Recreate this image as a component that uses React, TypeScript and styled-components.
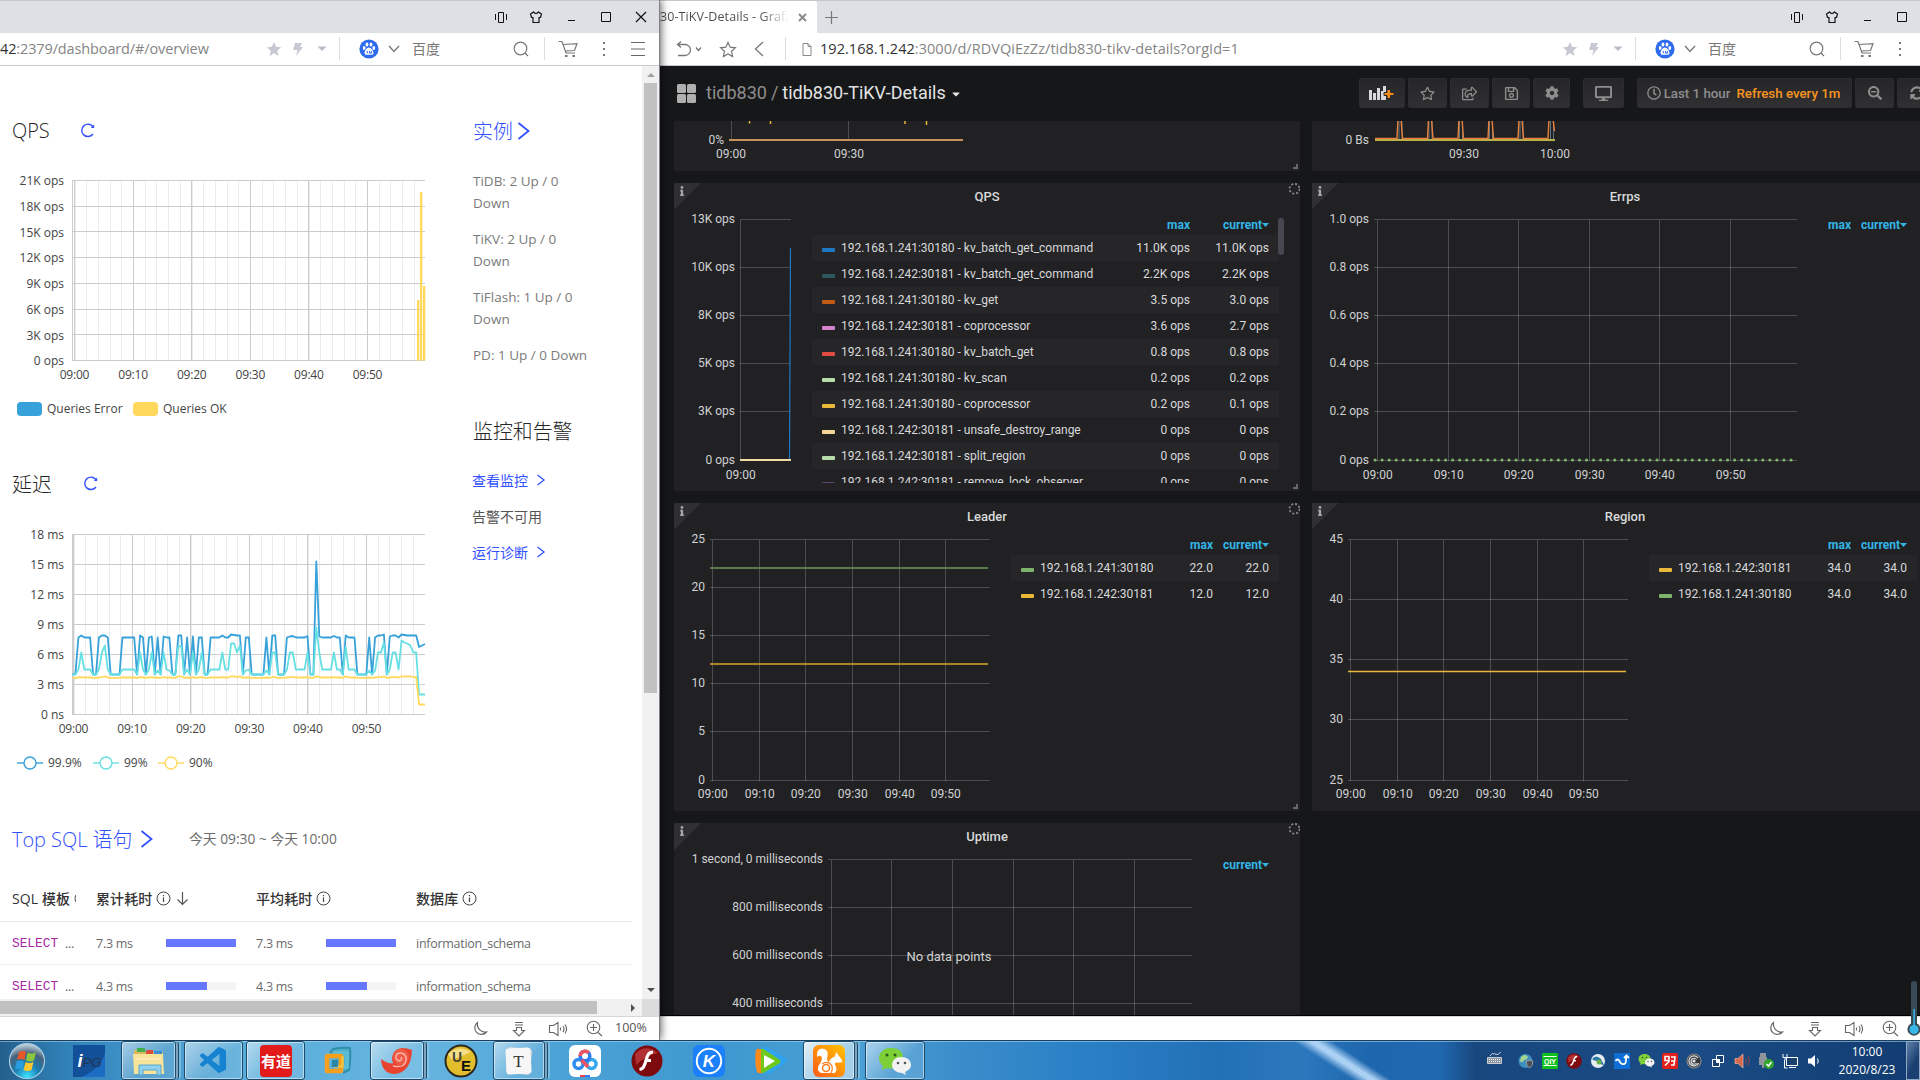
import React from "react";
import styled, { createGlobalStyle, css } from "styled-components";
import {
  FaCog, FaDesktop, FaInfo, FaRegClock, FaRegSave, FaRegShareSquare, FaRegStar, FaSearchMinus, FaSyncAlt, FaCaretDown,
} from "react-icons/fa";
import { VscVscode } from "react-icons/vsc";

const UI_FONT = `"Open Sans", "Noto Sans CJK SC", sans-serif`;
const GRAFANA_FONT = `Roboto, "Noto Sans CJK SC", sans-serif`;

const GlobalStyle = createGlobalStyle`
  * { box-sizing: border-box; }
  body { margin: 0; background: #16181b; overflow: hidden; }
  svg { display: block; flex: none; }
`;

/* ---------- Desktop ---------- */

const Desktop = styled.div`
  width: 1920px;
  height: 1080px;
  display: flex;
  flex-direction: column;
  overflow: hidden;
  font-family: ${UI_FONT};
`;

const Windows = styled.div`
  height: 1040px;
  display: flex;
  overflow: hidden;
`;

const Window = styled.section<{ $width: number; $front?: boolean }>`
  flex: none;
  width: ${(p) => p.$width}px;
  height: 1040px;
  display: flex;
  flex-direction: column;
  background: #fff;
  ${(p) =>
    p.$front &&
    css`
      position: relative;
      z-index: 2;
      border-right: 1px solid #7d8085;
      box-shadow: 0 0 9px rgba(0, 0, 0, 0.75);
    `}
`;

/* ---------- Browser chrome ---------- */

const TitleBar = styled.div`
  height: 33px;
  flex: none;
  display: flex;
  background: #dfe0e5;
  border-top: 1px solid #c5c6ca;
`;

const WindowButtons = styled.div`
  margin-left: auto;
  margin-right: 1px;
  display: flex;
`;

const Slot = styled.div<{ $w: number; $ml?: number }>`
  width: ${(p) => p.$w}px;
  margin-left: ${(p) => p.$ml || 0}px;
  flex: none;
  display: flex;
  align-items: center;
  justify-content: center;
`;

const Tab = styled.div`
  width: 157px;
  display: flex;
  align-items: center;
  background: #fff;
  border-radius: 0 2px 0 0;
`;

const TabTitle = styled.span`
  width: 129px;
  overflow: hidden;
  white-space: nowrap;
  padding-bottom: 2px;
  font-size: 12.5px;
  letter-spacing: 0.1px;
  background: linear-gradient(90deg, #4a4a4a 78%, #fff 100%);
  -webkit-background-clip: text;
  color: transparent;
`;

const AddressBar = styled.div`
  height: 33px;
  flex: none;
  display: flex;
  align-items: stretch;
  border-bottom: 1px solid #c9c9c9;
  background: #fff;
`;

const Url = styled.div<{ $spacing: number }>`
  display: flex;
  align-items: center;
  padding-bottom: 2px;
  white-space: nowrap;
  font-size: 14.5px;
  letter-spacing: ${(p) => p.$spacing}px;
  color: #858585;
  b { font-weight: 400; color: #333; }
`;

const Cluster = styled.div`
  margin-left: auto;
  margin-right: 7px;
  display: flex;
  align-items: stretch;
`;

const Divider = styled.div<{ $ml: number; $mr: number }>`
  width: 1px;
  margin: 4px ${(p) => p.$mr}px 5px ${(p) => p.$ml}px;
  background: #dcdce2;
`;

const EngineName = styled.span`
  width: 28px;
  margin-left: 8px;
  align-self: center;
  padding-bottom: 2px;
  font-size: 14px;
  color: #777;
`;

const StatusBar = styled.div`
  height: 24px;
  flex: none;
  display: flex;
  justify-content: flex-end;
  background: #fff;
  border-top: 1px solid #d8d8dc;
`;

const ZoomText = styled.span`
  width: 47px;
  align-self: center;
  padding: 0 0 2px 3px;
  font-size: 12.5px;
  color: #555;
`;

function ChromeButtons({ close }: { close?: boolean }) {
  return (
    <>
      <Slot $w={35}>
        <svg width="14" height="14" fill="none" stroke="#111">
          <path d="M4.500 2.500h5v10h-5zM1.500 4v6M12.500 4v6" />
        </svg>
      </Slot>
      <Slot $w={35}>
        <svg width="14" height="14" fill="none" stroke="#111" strokeWidth="1.200">
          <path d="M4.500 2 L1.500 4 L2.500 7.500 H4 V12.500 H10 V7.500 H11.500 L12.500 4 L9.500 2 Q7 5 4.500 2z" />
        </svg>
      </Slot>
      <Slot $w={35}>
        <svg width="14" height="14" stroke="#111"><path d="M4 10.500h7" /></svg>
      </Slot>
      <Slot $w={35}>
        <svg width="14" height="14" fill="none" stroke="#111"><path d="M2.500 2.500h9v9h-9z" /></svg>
      </Slot>
      <Slot $w={35}>
        {close && (
          <svg width="14" height="14" stroke="#111" strokeWidth="1.200"><path d="M2 2l10 10M12 2L2 12" /></svg>
        )}
      </Slot>
    </>
  );
}

function AddressCluster() {
  return (
    <Cluster>
      <Slot $w={24}>
        <svg width="16" height="16" fill="#c6c8d4"><path d="M8 1l2.100 4.800 5 .5-3.800 3.500 1.100 5.200L8 12.300 3.600 15l1.100-5.200L.9 6.300l5-.5z" /></svg>
      </Slot>
      <Slot $w={24}>
        <svg width="12" height="16" fill="#c6c8d4"><path d="M3 2h7L8 6h3L4 15l1.500-6H1z" /></svg>
      </Slot>
      <Slot $w={24}>
        <svg width="10" height="6" fill="#b9bbc6"><path d="M.5.5h9L5 5z" /></svg>
      </Slot>
      <Divider $ml={5} $mr={14} />
      <Slot $w={30}>
        <svg width="20" height="20" fill="#fff">
          <circle cx="10" cy="10" r="9.600" fill="#2f6bee" />
          <ellipse cx="5.200" cy="9" rx="1.400" ry="1.900" />
          <ellipse cx="8" cy="5.600" rx="1.400" ry="2" />
          <ellipse cx="12" cy="5.600" rx="1.400" ry="2" />
          <ellipse cx="14.800" cy="9" rx="1.400" ry="1.900" />
          <path d="M10 8.500c2 0 4.500 3.500 4.500 5.200 0 2.600-2.600 2-4.500 2s-4.500.6-4.500-2C5.500 12 8 8.500 10 8.500z" />
          <path d="M8.300 12v2.300M10.600 12v2.200h1.800V12" stroke="#2f6bee" fill="none" />
        </svg>
      </Slot>
      <Slot $w={20}>
        <svg width="12" height="8" fill="none" stroke="#777" strokeWidth="1.300"><path d="M1 1l5 5.500L11 1" /></svg>
      </Slot>
      <EngineName>百度</EngineName>
      <Slot $w={20} $ml={71}>
        <svg width="16" height="16" fill="none" stroke="#777" strokeWidth="1.200"><circle cx="7.500" cy="7.500" r="6.300" /><path d="M12 12l3 3" /></svg>
      </Slot>
      <Divider $ml={13} $mr={9} />
      <Slot $w={28}>
        <svg width="20" height="18" fill="none" stroke="#777" strokeWidth="1.200">
          <path d="M.5 1.500H4L8 13h9M5 4.500l14-.8-2.500 6.800-9.200.5" />
          <path d="M7 16h2.500M14.500 16H17" strokeWidth="2" />
        </svg>
      </Slot>
      <Slot $w={24} $ml={10}>
        <svg width="4" height="16" fill="#777"><path d="M1 1h2v2H1zM1 7h2v2H1zM1 13h2v2H1z" /></svg>
      </Slot>
      <Slot $w={28} $ml={8}>
        <svg width="14" height="16" stroke="#666" strokeWidth="1.200"><path d="M0 1.500h14M0 8h14M0 14.500h14" /></svg>
      </Slot>
    </Cluster>
  );
}

function StatusIcons({ label }: { label: string }) {
  return (
    <StatusBar>
      <Slot $w={38}>
        <svg width="16" height="16" fill="none" stroke="#666" strokeWidth="1.200"><path d="M5.500 1.500A6.600 6.600 0 1 0 14.500 11C9 12 4.500 7 5.500 1.500z" /></svg>
      </Slot>
      <Slot $w={39}>
        <svg width="14" height="16" fill="none" stroke="#666" strokeWidth="1.100"><path d="M3 1.500h8M3 4h8M4.500 6.500h5v3h3L7 15 1.500 9.500h3z" /></svg>
      </Slot>
      <Slot $w={39}>
        <svg width="20" height="16" fill="none" stroke="#666" strokeWidth="1.100"><path d="M1.500 4.500h4L10 1.500v13L5.500 11.500h-4zM12.500 6.500v3M15 5q2 3 0 6M17 3.500q3 4.500 0 9" /></svg>
      </Slot>
      <Slot $w={35}>
        <svg width="17" height="17" fill="none" stroke="#666" strokeWidth="1.100"><circle cx="7.500" cy="7.500" r="6.300" /><path d="M12 12.500l4 3.500M4 7.500h7M7.500 4v7" /></svg>
      </Slot>
      <ZoomText>{label}</ZoomText>
    </StatusBar>
  );
}

/* ---------- TiDB dashboard (left) ---------- */

const Viewport = styled.div`
  height: 950px;
  display: grid;
  grid-template-columns: 642px 1fr;
  grid-template-rows: 933px 17px;
  background: #fff;
`;

const Page = styled.div`
  overflow: hidden;
  padding-top: 49px;
  display: flex;
  flex-direction: column;
`;

const Overview = styled.div`
  flex: none;
  display: grid;
  grid-template-columns: 473px 1fr;
  height: 667px;
`;

const Column = styled.div`
  display: flex;
  flex-direction: column;
`;

const Heading = styled.h2<{ $mt?: number; $link?: boolean; $pl?: number }>`
  flex: none;
  margin: ${(p) => p.$mt || 0}px 0 0;
  padding-left: ${(p) => p.$pl || 0}px;
  height: 32px;
  display: flex;
  align-items: center;
  white-space: nowrap;
  font-size: 19.900px;
  font-weight: 300;
  color: ${(p) => (p.$link ? "#3351ff" : "#262626")};
`;

const HeadingText = styled.span<{ $w: number }>`
  width: ${(p) => p.$w}px;
  padding-bottom: 2px;
`;

const Range = styled.span`
  margin-left: 35px;
  padding-bottom: 3px;
  font-size: 13.800px;
  font-weight: 400;
  color: #6c6c6c;
`;

const ChartLegend = styled.div`
  height: 38px;
  padding-left: 17px;
  display: flex;
  align-items: center;
  font-size: 12px;
  color: #444;
`;

const LegendLabel = styled.span<{ $w: number }>`
  width: ${(p) => p.$w}px;
  margin-left: 5px;
  padding-bottom: 1px;
  white-space: nowrap;
`;

const Swatch = styled.i<{ $c: string }>`
  width: 25px;
  height: 14px;
  border-radius: 4px;
  background: ${(p) => p.$c};
`;

const Instance = styled.p`
  width: 120px;
  margin: 0 0 14px;
  font-size: 13.500px;
  line-height: 22px;
  color: #7b7b7b;
`;

const InstanceList = styled.div`
  margin-top: 23px;
  height: 245px;
`;

const ActionLine = styled.div<{ $link?: boolean }>`
  height: 36px;
  display: flex;
  align-items: center;
  gap: 8px;
  padding-bottom: 2px;
  font-size: 14px;
  color: ${(p) => (p.$link ? "#3351ff" : "#555")};
`;

const Actions = styled.div`
  margin: 16px 0 0 -1px;
`;

const Table = styled.div`
  flex: none;
  width: 632px;
  margin-top: 22px;
`;

const Row = styled.div<{ $head?: boolean }>`
  height: ${(p) => (p.$head ? 45 : 43)}px;
  padding: 0 0 ${(p) => (p.$head ? 2 : 0)}px 12px;
  display: grid;
  grid-template-columns: 84px 160px 160px 1fr;
  align-items: center;
  border-bottom: 1px solid ${(p) => (p.$head ? "#e6e6e6" : "#f0f0f0")};
  font-size: ${(p) => (p.$head ? 14 : 12.500)}px;
  font-weight: ${(p) => (p.$head ? 500 : 400)};
  letter-spacing: ${(p) => (p.$head ? 0.1 : -0.27)}px;
  color: ${(p) => (p.$head ? "#333" : "#6a6a6a")};
  white-space: nowrap;
`;

const Cell = styled.div<{ $clip?: number }>`
  display: flex;
  align-items: center;
  gap: 4px;
  overflow: hidden;
  width: ${(p) => (p.$clip ? `${p.$clip}px` : "auto")};
`;

const Sql = styled.code`
  font-family: "Liberation Mono", monospace;
  font-size: 12.800px;
  letter-spacing: 0;
  color: #a626a4;
`;

const Amount = styled.span`
  width: 66px;
`;

const Meter = styled.div`
  width: 70px;
  height: 8px;
  background: #f4f4f4;
`;

const MeterFill = styled.div<{ $ratio: number }>`
  width: ${(p) => p.$ratio * 100}%;
  height: 8px;
  background: #6678ff;
`;

const VScroll = styled.div`
  background: #f1f1f1;
  display: flex;
  flex-direction: column;
  align-items: center;
  justify-content: space-between;
  padding: 7px 0 6px;
`;

const VThumb = styled.div`
  width: 13px;
  height: 610px;
  margin-top: 6px;
  margin-bottom: auto;
  background: #c1c1c1;
`;

const HScroll = styled.div`
  background: #f1f1f1;
  display: flex;
  align-items: center;
  justify-content: space-between;
  padding-right: 6px;
`;

const HThumb = styled.div`
  width: 597px;
  height: 13px;
  background: #c1c1c1;
`;

const ScrollCorner = styled.div`
  background: #dcdcdc;
`;

const Chevron = ({ size }: { size: "l" | "s" }) =>
  size === "l" ? (
    <svg width="14" height="18" fill="none" stroke="#3351ff" strokeWidth="1.800"><path d="M1.500 1l10 8-10 8" /></svg>
  ) : (
    <svg width="10" height="12" fill="none" stroke="#3351ff" strokeWidth="1.300"><path d="M1.500 1L8 6l-6.500 5" /></svg>
  );

const Reload = () => (
  <svg width="16" height="16" fill="none" stroke="#3351ff" strokeWidth="1.400">
    <path d="M13 11A6.200 6.200 0 1 1 13.200 4" /><path d="M14.200 1.500v3.500h-3.400z" fill="#3351ff" stroke="none" />
  </svg>
);

const InfoCircle = () => (
  <svg width="15" height="15" fill="none" stroke="#444"><circle cx="7.500" cy="7.500" r="6.500" /><path d="M7.500 6.500v4.500M7.500 4v1.300" strokeWidth="1.200" /></svg>
);

const minutes = ["09:00", "09:10", "09:20", "09:30", "09:40", "09:50"];

const lightText = { fontFamily: "Open Sans, sans-serif", fontSize: 12, fill: "#444" };

function LightGrid({ top, step, labels, left, x0 }: { top: number; step: number; labels: string[]; left: number; x0: number }) {
  const bottom = top + step * (labels.length - 1);
  const minors = Array.from({ length: 30 }, (_, i) => x0 + i * 11.7);
  return (
    <g shapeRendering="crispEdges">
      {minors.map((x, i) => (
        <path key={i} d={`M${x} ${top}V${bottom}`} stroke="#ececec" />
      ))}
      {labels.map((l, i) => (
        <path key={l} d={`M${left} ${Math.round(top + i * step) + 0.5}H425`} stroke="#ccc" />
      ))}
      {minutes.map((m, i) => (
        <path key={m} d={`M${Math.round(x0 + i * 58.6) - 0.5} ${top}V${bottom}`} stroke="#ccc" />
      ))}
      <path d={`M${left + 0.5} ${top}V${bottom + 1}`} stroke="#ccc" />
      {labels.map((l, i) => (
        <text key={l} x="64" y={top + i * step + 1} dy=".36em" textAnchor="end" {...lightText}>{l}</text>
      ))}
      {minutes.map((m, i) => (
        <text key={m} x={x0 - 0.500 + i * 58.6} y={bottom + 14.500} dy=".36em" textAnchor="middle" letterSpacing="-.2" {...lightText}>{m}</text>
      ))}
    </g>
  );
}

/* Latency samples, one every 30 seconds, in milliseconds. */
const p999 = [
  4.05, 4.05, 7.7, 7.9, 7.7, 7.7, 7.7, 4, 4, 7.7, 7.9, 7.9, 7.7, 4, 4, 4, 4, 7.7, 7.7, 7.7, 7.7, 7.7, 4, 7.9, 7.7, 4, 7.7, 7.8, 4, 7.7, 4, 7.8,
  7.7, 7.7, 4, 4, 7.9, 7.9, 4, 7.7, 4, 7.8, 4, 7.7, 7.7, 4, 4, 7.7, 7.7, 7.7, 7.7, 7.9, 7.7, 7.7, 8, 7.95, 7.9, 7.9, 4, 7.7, 7.7, 4, 4, 4, 4, 4,
  7.7, 4, 7.9, 7.9, 4, 4, 4, 7.7, 7.8, 7.85, 7.7, 7.7, 7.7, 7.7, 7.85, 4, 4, 15.3, 7.8, 7.7, 7.7, 7.7, 7.7, 7.85, 7.7, 7.7, 4, 7.9, 7.7, 7.7, 7.7,
  4, 4, 4, 4, 7.7, 4, 7.7, 7.9, 7.9, 8, 4, 7.8, 7.9, 7.9, 7.7, 8, 7.95, 7.9, 7.9, 7.9, 7.9, 6.75, 6.9, 7.05,
];
const p99 = [
  4, 4, 4.5, 6.2, 4.5, 4.5, 4.5, 4, 4, 4.5, 6.2, 6.9, 4.5, 4, 4, 4, 4, 4.5, 4.5, 4.5, 4.5, 4.5, 4, 6.2, 4.5, 4, 4.5, 6.2, 4, 4.4, 4, 6.2, 4.5,
  4.4, 4, 4, 6.8, 6.9, 4, 4.5, 4, 6.2, 4, 4.5, 6.2, 4, 4, 4.5, 4.5, 4.5, 4.5, 6.2, 4.5, 4.5, 7.1, 7.1, 6.2, 6.9, 4, 4.4, 4.5, 4, 4, 4, 4, 4, 4.4,
  4, 6.2, 6.2, 4, 4, 4, 4.5, 6.2, 6.2, 4.5, 4.5, 4.5, 4.5, 6.2, 4, 4, 8.7, 6.2, 4.5, 4.5, 4.5, 4.5, 6.2, 4.5, 4.5, 4, 6.8, 4.5, 4.5, 4.5, 4, 4,
  4, 4, 4.4, 4, 4.4, 6.2, 6.2, 7.2, 4, 4.5, 6.2, 6.2, 4.5, 7.4, 7.2, 7.1, 6.9, 6.2, 6.2, 2, 2, 2,
];
const p90 = p99.map((v) => (v === 2 ? 1 : v < 4.2 ? 3.66 : v < 5 ? 3.7 : v < 6.5 ? 3.74 : 3.82));

const latencyPath = (values: number[]) =>
  values.map((v, i) => `${i ? "L" : "M"}${(72.500 + (i * 352.500) / (values.length - 1)).toFixed(1)} ${(714.500 - v * 10).toFixed(1)}`).join("");

const latencySeries = [
  { name: "99.9%", color: "#37a2da", values: p999, w: 45 },
  { name: "99%", color: "#67e0e3", values: p99, w: 34 },
  { name: "90%", color: "#ffd85c", values: p90, w: 40 },
];

const instances = ["TiDB: 2 Up / 0 Down", "TiKV: 2 Up / 0 Down", "TiFlash: 1 Up / 0 Down", "PD: 1 Up / 0 Down"];

function DashboardWindow() {
  return (
    <Window $width={660} $front>
      <TitleBar>
        <WindowButtons><ChromeButtons close /></WindowButtons>
      </TitleBar>
      <AddressBar>
        <Url $spacing={-0.13}><b>42</b>:2379/dashboard/#/overview</Url>
        <AddressCluster />
      </AddressBar>
      <Viewport>
        <Page>
          <Overview>
            <Column>
              <Heading $pl={12}><HeadingText $w={68}>QPS</HeadingText><Reload /></Heading>
              <svg width="473" height="243" viewBox="0 147 473 243">
                <LightGrid
                  top={180} step={25.714} left={72} x0={75}
                  labels={["21K ops", "18K ops", "15K ops", "12K ops", "9K ops", "6K ops", "3K ops", "0 ops"]}
                />
                <path d="M417 300h2.300v60.500H417zM420 192h2.300v168.500H420zM423 286h2.300v74.500H423z" fill="#ffd85c" />
              </svg>
              <ChartLegend>
                <Swatch $c="#37a2da" /><LegendLabel $w={86}>Queries Error</LegendLabel>
                <Swatch $c="#ffd85c" /><LegendLabel $w={80}>Queries OK</LegendLabel>
              </ChartLegend>
              <Heading $pl={12} $mt={40}><HeadingText $w={71}>延迟</HeadingText><Reload /></Heading>
              <svg width="473" height="244" viewBox="0 500 473 244">
                <LightGrid top={534} step={30} left={72} x0={74} labels={["18 ms", "15 ms", "12 ms", "9 ms", "6 ms", "3 ms", "0 ns"]} />
                {latencySeries.map((s) => (
                  <path key={s.name} d={latencyPath(s.values)} fill="none" stroke={s.color} strokeWidth="1.800" strokeLinejoin="round" />
                ))}
              </svg>
              <ChartLegend>
                {latencySeries.map((s) => (
                  <React.Fragment key={s.name}>
                    <svg width="26" height="14" stroke={s.color} strokeWidth="1.400" fill="#fff"><path d="M0 7h26" /><circle cx="13" cy="7" r="6" /></svg>
                    <LegendLabel $w={s.w}>{s.name}</LegendLabel>
                  </React.Fragment>
                ))}
              </ChartLegend>
            </Column>
            <Column>
              <Heading $link><HeadingText $w={44}>实例</HeadingText><Chevron size="l" /></Heading>
              <InstanceList>{instances.map((t) => <Instance key={t}>{t}</Instance>)}</InstanceList>
              <Heading><HeadingText $w={110}>监控和告警</HeadingText></Heading>
              <Actions>
                <ActionLine $link>查看监控<Chevron size="s" /></ActionLine>
                <ActionLine>告警不可用</ActionLine>
                <ActionLine $link>运行诊断<Chevron size="s" /></ActionLine>
              </Actions>
            </Column>
          </Overview>
          <Heading $pl={12} $mt={41} $link>
            <HeadingText $w={128}>Top SQL 语句</HeadingText><Chevron size="l" />
            <Range>今天 09:30 ~ 今天 10:00</Range>
          </Heading>
          <Table>
            <Row $head>
              <Cell $clip={64}>SQL 模板<InfoCircle /></Cell>
              <Cell>累计耗时<InfoCircle />
                <svg width="14" height="15" fill="none" stroke="#555" strokeWidth="1.200"><path d="M7.500 1v12.500M2.500 8.500l5 5 5-5" /></svg>
              </Cell>
              <Cell>平均耗时<InfoCircle /></Cell>
              <Cell>数据库<InfoCircle /></Cell>
            </Row>
            {[{ t: "7.3 ms", r: 1 }, { t: "4.3 ms", r: 0.59 }].map((q) => (
              <Row key={q.t}>
                <Cell><Sql>SELECT</Sql>&nbsp;...</Cell>
                <Cell><Amount>{q.t}</Amount><Meter><MeterFill $ratio={q.r} /></Meter></Cell>
                <Cell><Amount>{q.t}</Amount><Meter><MeterFill $ratio={q.r} /></Meter></Cell>
                <Cell>information_schema</Cell>
              </Row>
            ))}
          </Table>
        </Page>
        <VScroll>
          <svg width="8" height="4" fill="#a0a0a0"><path d="M0 4l4-4 4 4z" /></svg>
          <VThumb />
          <svg width="8" height="5" fill="#505050"><path d="M0 0h8L4 4z" /></svg>
        </VScroll>
        <HScroll>
          <HThumb />
          <svg width="5" height="8" fill="#505050"><path d="M0 0v8l4-4z" /></svg>
        </HScroll>
        <ScrollCorner />
      </Viewport>
      <StatusIcons label="100%" />
    </Window>
  );
}

/* ---------- Grafana (right) ---------- */

const Grafana = styled.div`
  height: 950px;
  overflow: hidden;
  background: #161719;
  border-bottom: 1px solid #000;
  font-family: ${GRAFANA_FONT};
  color: #d8d9da;
`;

const GrafanaHeader = styled.header`
  height: 55px;
  padding: 0 0 1px 17px;
  display: flex;
  align-items: center;
`;

const Breadcrumb = styled.div`
  width: 653px;
  margin-left: 10px;
  display: flex;
  align-items: center;
  gap: 4px;
  padding-bottom: 1px;
  font-size: 18px;
  color: #8e8e8e;
  b { font-weight: 400; color: #e3e3e3; }
  svg { margin-top: 3px; color: #e3e3e3; }
`;

const NavButton = styled.button<{ $w: number; $ml?: number }>`
  flex: none;
  width: ${(p) => p.$w}px;
  height: 30px;
  margin: 0 0 0 ${(p) => (p.$ml === undefined ? 3 : p.$ml)}px;
  padding: 0;
  display: flex;
  align-items: center;
  justify-content: center;
  gap: 3px;
  border: 1px solid #2c2c2f;
  border-radius: 2px;
  background: linear-gradient(#262628, #303032);
  color: #8e8e8e;
  font: 400 13.300px ${GRAFANA_FONT};
  b { font-weight: 500; color: #f79520; margin-left: 3px; }
`;

const TimeRange = styled.span`
  display: flex;
  align-items: center;
  gap: 3px;
  margin-left: -2px;
  font-weight: 500;
`;

const PanelGrid = styled.div`
  padding-left: 14px;
  display: grid;
  grid-template-columns: 626px 626px;
  grid-template-rows: 50px 308px 308px 308px;
  gap: 12px;
`;

const PanelBox = styled.article`
  position: relative;
  background: #212124;
  border-radius: 2px;
  overflow: hidden;
`;

const PanelTitle = styled.h3`
  height: 27px;
  margin: 0;
  font-size: 13px;
  line-height: 27px;
  font-weight: 500;
  text-align: center;
  color: #d8d9da;
`;

const PanelBody = styled.div`
  display: flex;
`;

const InfoCorner = styled.div`
  position: absolute;
  left: 0;
  top: 0;
  width: 27px;
  height: 27px;
  padding: 3px 0 0 3px;
  font-size: 10px;
  color: #a8a8a8;
  background: linear-gradient(135deg, #303034 50%, transparent 50%);
`;

const Spinner = styled.div`
  position: absolute;
  right: 0;
  top: 0;
`;

const ResizeHandle = styled.div`
  position: absolute;
  right: 2px;
  bottom: 2px;
  width: 5px;
  height: 5px;
  border: solid #6a6a6a;
  border-width: 0 2px 2px 0;
`;

const Legend = styled.div<{ $w: number }>`
  width: ${(p) => p.$w}px;
  height: 273px;
  padding-top: 4px;
  overflow: hidden;
  font-size: 12px;
`;

const LegendRow = styled.div<{ $cur: number; $head?: boolean; $odd?: boolean }>`
  height: ${(p) => (p.$head ? 21 : 26)}px;
  padding: 0 10px;
  display: grid;
  grid-template-columns: 13px 1fr auto ${(p) => p.$cur}px;
  align-items: center;
  white-space: nowrap;
  background: ${(p) => (p.$odd ? "#262629" : "transparent")};
  font-weight: ${(p) => (p.$head ? 700 : 400)};
  color: ${(p) => (p.$head ? "#33b5e5" : "#d8d9da")};
  span { padding-left: 6px; }
  em { font-style: normal; text-align: right; display: flex; justify-content: flex-end; align-items: center; }
`;

const SeriesDash = styled.i<{ $c: string }>`
  height: 4px;
  margin-top: 4px;
  border-radius: 1px;
  background: ${(p) => p.$c};
`;

const LegendScrollbar = styled.div`
  width: 6px;
  height: 37px;
  margin: 8px 0 0 -1px;
  border-radius: 3px;
  background: #464751;
`;

type Series = { name: string; color: string; max: string; cur: string };

function SeriesLegend({ w, cur = 56, rows = [], noMax }: { w: number; cur?: number; rows?: Series[]; noMax?: boolean }) {
  return (
    <Legend $w={w}>
      <LegendRow $head $cur={cur}>
        <i /><span /><em>{noMax ? "" : "max"}</em>
        <em>current<svg width="7" height="4" fill="#33b5e5"><path d="M0 0h7L3.500 4z" /></svg></em>
      </LegendRow>
      {rows.map((r, i) => (
        <LegendRow key={r.name} $cur={cur} $odd={i % 2 === 0}>
          <SeriesDash $c={r.color} /><span>{r.name}</span><em>{r.max}</em><em>{r.cur}</em>
        </LegendRow>
      ))}
    </Legend>
  );
}

const darkText = { fontFamily: "Roboto, sans-serif", fontSize: 12, fill: "#d0d1d2" };

type GridProps = {
  x: number; y: number; w: number; h?: number;
  left: number; right: number;
  ys: [number, string][];
  xs: number[];
  xLabels?: string[];
  bottom?: number;
  children?: React.ReactNode;
};

function DarkChart({ x, y, w, h = 281, left, right, ys, xs, xLabels = [], bottom, children }: GridProps) {
  const floor = bottom || ys[ys.length - 1][0];
  return (
    <svg width={w} height={h} viewBox={`${x} ${y} ${w} ${h}`}>
      <g stroke="#fff" strokeOpacity=".2" shapeRendering="crispEdges">
        {ys.map(([v]) => <path key={v} d={`M${left} ${v}H${right}`} />)}
        {xs.map((v) => <path key={v} d={`M${v} ${ys[0][0]}V${floor}`} />)}
      </g>
      {children}
      {ys.map(([v, l]) => (
        <text key={v} x={left - 5} y={v - 0.500} dy=".35em" textAnchor="end" {...darkText}>{l}</text>
      ))}
      {xLabels.map((l, i) => (
        <text key={l} x={xs[i] + 0.300} y={Math.max(floor + 13.500, floor < 500 ? floor + 14.500 : 0)} dy=".35em" textAnchor="middle" {...darkText}>{l}</text>
      ))}
    </svg>
  );
}

function Panel({ title, children }: { title: string; children: React.ReactNode }) {
  return (
    <PanelBox>
      <PanelTitle>{title}</PanelTitle>
      <PanelBody>{children}</PanelBody>
      <InfoCorner><FaInfo /></InfoCorner>
      <Spinner>
        <svg width="12" height="12" fill="none" stroke="#8e8e8e" strokeWidth="1.600"><circle cx="6.500" cy="5.800" r="5" strokeDasharray="2 1.930" /></svg>
      </Spinner>
      <ResizeHandle />
    </PanelBox>
  );
}

const ops = (labels: string[]): [number, string][] => labels.map((l, i) => [i === 5 ? 460.500 : 219.500 + i * 48, `${l} ops`]);

const qpsSeries: Series[] = [
  { name: "192.168.1.241:30180 - kv_batch_get_command", color: "#1f78c1", max: "11.0K ops", cur: "11.0K ops" },
  { name: "192.168.1.242:30181 - kv_batch_get_command", color: "#2f575e", max: "2.2K ops", cur: "2.2K ops" },
  { name: "192.168.1.241:30180 - kv_get", color: "#c15c17", max: "3.5 ops", cur: "3.0 ops" },
  { name: "192.168.1.242:30181 - coprocessor", color: "#d683ce", max: "3.6 ops", cur: "2.7 ops" },
  { name: "192.168.1.241:30180 - kv_batch_get", color: "#e24d42", max: "0.8 ops", cur: "0.8 ops" },
  { name: "192.168.1.241:30180 - kv_scan", color: "#b7dbab", max: "0.2 ops", cur: "0.2 ops" },
  { name: "192.168.1.241:30180 - coprocessor", color: "#eab839", max: "0.2 ops", cur: "0.1 ops" },
  { name: "192.168.1.242:30181 - unsafe_destroy_range", color: "#f4d598", max: "0 ops", cur: "0 ops" },
  { name: "192.168.1.242:30181 - split_region", color: "#b7dbab", max: "0 ops", cur: "0 ops" },
  { name: "192.168.1.242:30181 - remove_lock_observer", color: "#584477", max: "0 ops", cur: "0 ops" },
];

const GREEN = "#7eb26d";
const YELLOW = "#eab839";

function GrafanaWindow() {
  return (
    <Window $width={1295}>
      <TitleBar>
        <Tab>
          <TabTitle>30-TiKV-Details - Grafa</TabTitle>
          <Slot $w={26}><svg width="9" height="9" stroke="#8a8a8a" strokeWidth="2"><path d="M1 1l7 7M8 1L1 8" /></svg></Slot>
        </Tab>
        <Slot $w={28}><svg width="13" height="13" stroke="#777" strokeWidth="1.200"><path d="M6.500 0v13M0 6.500h13" /></svg></Slot>
        <WindowButtons><ChromeButtons /></WindowButtons>
      </TitleBar>
      <AddressBar>
        <Slot $w={32} $ml={13}>
          <svg width="26" height="16" fill="none" stroke="#777" strokeWidth="1.300">
            <path d="M5 .5L1.500 3.500 5 6.500M1.500 3.500H9a5.500 5.500 0 0 1 0 11H2M20 6.500l2.500 3 2.500-3" />
          </svg>
        </Slot>
        <Slot $w={24} $ml={11}>
          <svg width="18" height="17" fill="none" stroke="#777" strokeWidth="1.200"><path d="M9 1.500l2.200 4.700 5.200.6-3.900 3.500 1.100 5.200L9 12.900l-4.600 2.600 1.100-5.200-3.900-3.500 5.200-.6z" /></svg>
        </Slot>
        <Slot $w={20} $ml={9}>
          <svg width="10" height="16" fill="none" stroke="#777" strokeWidth="1.300"><path d="M9 1L1.500 8 9 15" /></svg>
        </Slot>
        <Divider $ml={16} $mr={11} />
        <Slot $w={20}>
          <svg width="10" height="13" fill="none" stroke="#888"><path d="M1 .5h5l3 3v9H1zM6 .5v3h3" /></svg>
        </Slot>
        <Slot $w={3} />
        <Url $spacing={0.04}><b>192.168.1.242</b>:3000/d/RDVQiEzZz/tidb830-tikv-details?orgId=1</Url>
        <AddressCluster />
      </AddressBar>
      <Grafana>
        <GrafanaHeader>
          <svg width="19" height="19" fill="#b0b0b0"><rect width="9" height="9" rx="1.500" /><rect x="10" width="9" height="9" rx="1.500" /><rect y="10" width="9" height="9" rx="1.500" /><rect x="10" y="10" width="9" height="9" rx="1.500" /></svg>
          <Breadcrumb><span>tidb830</span><span>/</span><b>tidb830-TiKV-Details</b><FaCaretDown size={12} /></Breadcrumb>
          <NavButton $w={46} $ml={0}>
            <svg width="26" height="16">
              <path d="M0 5h3v10H0zM4 8h3v7H4zM8 3h3v12H8zM12 6h3v9h-3zM14 1h3v14h-3z" fill="#d8d9da" />
              <path d="M18 4.500h3.500v3H25v3h-3.500v3H18v-3h-3v-3h3z" fill="#f38a1c" stroke="#2a2a2c" />
            </svg>
          </NavButton>
          <NavButton $w={39}><FaRegStar size={15} /></NavButton>
          <NavButton $w={39}><FaRegShareSquare size={15} /></NavButton>
          <NavButton $w={38}><FaRegSave size={15} /></NavButton>
          <NavButton $w={37}><FaCog size={14} /></NavButton>
          <NavButton $w={41} $ml={13}><FaDesktop size={17} /></NavButton>
          <NavButton $w={215} $ml={13}><TimeRange><FaRegClock size={14} />Last 1 hour</TimeRange><b>Refresh every 1m</b></NavButton>
          <NavButton $w={39}><FaSearchMinus size={14} /></NavButton>
          <NavButton $w={39}><FaSyncAlt size={14} /></NavButton>
        </GrafanaHeader>
        <PanelGrid>
          <PanelBox>
            <svg width="626" height="50" viewBox="674 121 626 50">
              <path d="M731.500 121v18M848.500 121v18" stroke="#4d4d50" />
              <path d="M749.500 121v2.500M770.500 121v3M905 121v3M926.500 121v4" stroke={YELLOW} strokeWidth="1.500" />
              <path d="M729 140H963" stroke="#c4915c" strokeWidth="2" />
              <text x="724" y="139.500" dy=".35em" textAnchor="end" {...darkText}>0%</text>
              <text x="731" y="154" dy=".35em" textAnchor="middle" {...darkText}>09:00</text>
              <text x="849" y="154" dy=".35em" textAnchor="middle" {...darkText}>09:30</text>
            </svg>
            <ResizeHandle />
          </PanelBox>
          <PanelBox>
            <svg width="608" height="50" viewBox="1312 121 608 50">
              <path d="M1375 140H1555" stroke="#b9b24a" strokeWidth="2" />
              {[1397.5, 1427.5, 1458, 1488, 1518.5, 1549].map((v) => (
                <path key={v} d={`M${v + 1.500} 121V139M${v + 4.500} 121V139`} stroke="#6d8a90" strokeWidth=".8" />
              ))}
              <path
                d="M1375 138.500H1397L1398 119M1401 119L1402.500 138.500H1427.500L1428.500 119M1431.500 119L1433 138.500H1458L1459 119M1462 119L1463.500 138.500H1488L1489 119M1492 119L1493.500 138.500H1518L1519 119M1522 119L1523.500 138.500H1548L1549 119M1553 119L1554.500 131"
                fill="none" stroke="#e9813e" strokeWidth="1.400"
              />
              <text x="1369" y="139.500" dy=".35em" textAnchor="end" {...darkText}>0 Bs</text>
              <text x="1464" y="154" dy=".35em" textAnchor="middle" {...darkText}>09:30</text>
              <text x="1555" y="154" dy=".35em" textAnchor="middle" {...darkText}>10:00</text>
            </svg>
          </PanelBox>

          <Panel title="QPS">
            <DarkChart x={674} y={210} w={138} left={740} right={791} ys={ops(["13K", "10K", "8K", "5K", "3K", "0"])} xs={[740.5]} xLabels={["09:00"]}>
              <path d="M789.500 459.500L790.500 248" stroke="#1f78c1" strokeWidth="1.200" />
              <path d="M740 460H791" stroke="#f0dca0" strokeWidth="2" />
            </DarkChart>
            <SeriesLegend w={467} cur={79} rows={qpsSeries} />
            <LegendScrollbar />
          </Panel>
          <Panel title="Errps">
            <DarkChart
              x={1312} y={210} w={486} left={1374} right={1797} ys={ops(["1.0", "0.8", "0.6", "0.4", "0.2", "0"])}
              xs={[1377.5, 1448.5, 1518.5, 1589.5, 1659.5, 1730.5]} xLabels={minutes}
            >
              <path d="M1375 460H1794" stroke={GREEN} strokeWidth="3" strokeLinecap="round" strokeDasharray="0.100 6.950" />
            </DarkChart>
            <SeriesLegend w={119} />
          </Panel>

          <Panel title="Leader">
            <DarkChart
              x={674} y={530} w={337} left={710} right={990}
              ys={[[539.5, "25"], [587.5, "20"], [635.5, "15"], [683.5, "10"], [731.5, "5"], [780.5, "0"]]}
              xs={[712.5, 759.5, 805.5, 852.5, 899.5, 945.5]} xLabels={minutes}
            >
              <path d="M710 568H988" stroke="#6c9a5e" strokeWidth="1.600" />
              <path d="M710 664H988" stroke="#d9a62e" strokeWidth="1.500" />
            </DarkChart>
            <SeriesLegend
              w={268}
              rows={[
                { name: "192.168.1.241:30180", color: GREEN, max: "22.0", cur: "22.0" },
                { name: "192.168.1.242:30181", color: YELLOW, max: "12.0", cur: "12.0" },
              ]}
            />
          </Panel>
          <Panel title="Region">
            <DarkChart
              x={1312} y={530} w={337} left={1348} right={1628}
              ys={[[539.5, "45"], [599.5, "40"], [659.5, "35"], [719.5, "30"], [780.5, "25"]]}
              xs={[1350.5, 1397.5, 1443.5, 1490.5, 1537.5, 1583.5]} xLabels={minutes}
            >
              <path d="M1348 671.500H1626" stroke={YELLOW} strokeWidth="1.300" />
            </DarkChart>
            <SeriesLegend
              w={268}
              rows={[
                { name: "192.168.1.242:30181", color: YELLOW, max: "34.0", cur: "34.0" },
                { name: "192.168.1.241:30180", color: GREEN, max: "34.0", cur: "34.0" },
              ]}
            />
          </Panel>

          <Panel title="Uptime">
            <DarkChart
              x={674} y={850} w={519} left={828} right={1192} bottom={1100}
              ys={[[859.5, "1 second, 0 milliseconds"], [907.5, "800 milliseconds"], [955.5, "600 milliseconds"], [1003.5, "400 milliseconds"]]}
              xs={[831.5, 891.5, 952.5, 1013.5, 1073.5, 1134.5]}
            >
              <text x="949" y="956.500" dy=".35em" textAnchor="middle" {...darkText} fontSize={13}>No data points</text>
            </DarkChart>
            <SeriesLegend w={86} cur={46} noMax />
          </Panel>
        </PanelGrid>
      </Grafana>
      <StatusIcons label="" />
    </Window>
  );
}

/* ---------- Taskbar ---------- */

const Taskbar = styled.footer`
  height: 40px;
  display: flex;
  align-items: stretch;
  border-top: 1px solid #1b3f5e;
  box-shadow: inset 0 1px 0 rgba(180, 220, 245, 0.55);
  background:
    linear-gradient(33deg, transparent 38%, rgba(178, 214, 248, 0.95) 48%, rgba(178, 214, 248, 0.95) 52%, transparent 62%) 1293px 0 / 100px 40px no-repeat,
    linear-gradient(90deg, #245f8d 0, #2f7fb4 60px, #3c8fc4 120px, #58abd9 240px, #66b5e0 420px, #4ba2d5 560px, #3e98cf 720px, #4a9fd4 860px, #3a8dca 960px, #2a80c6 1080px, #2270b6 1220px, #2c78bd 1300px, #1e66ad 1370px, #2068b0 1440px, #18477e 1475px, #1a4b84 1700px, #123c71 1920px);
`;

const TaskItem = styled.div<{ $w: number; $ml?: number; $open?: boolean; $active?: boolean; $stack?: boolean }>`
  flex: none;
  width: ${(p) => p.$w}px;
  height: 39px;
  margin-left: ${(p) => p.$ml || 0}px;
  display: flex;
  align-items: center;
  justify-content: center;
  ${(p) =>
    p.$open &&
    css`
      border: 1px solid #1c4a6c;
      border-radius: 3px;
      background: linear-gradient(135deg, rgba(255, 255, 255, ${p.$active ? 0.85 : 0.55}), rgba(255, 255, 255, ${p.$active ? 0.5 : 0.12}) 60%);
      box-shadow: inset 0 0 0 1px rgba(255, 255, 255, 0.5)${p.$stack ? ", 3px 0 0 -1px rgba(190,225,245,.6), 4px 0 0 -1px #1c4a6c, 6px 0 0 -1px rgba(150,205,235,.6)" : ""};
    `}
`;

const Tray = styled.div`
  margin-left: auto;
  display: flex;
  align-items: center;
`;

const Clock = styled.div`
  width: 80px;
  padding-left: 2px;
  text-align: center;
  font-size: 12px;
  line-height: 18px;
  color: #fff;
`;

const ShowDesktop = styled.div`
  width: 14px;
  height: 39px;
  border: 1px solid #8fa9c6;
  background: linear-gradient(120deg, #5f82a9, #1b3f70 60%);
`;

const Thermometer = styled.div`
  position: fixed;
  z-index: 5;
  left: 1907px;
  top: 980px;
`;

const iconFont = { fontFamily: "Liberation Sans, sans-serif", fontWeight: 700, textAnchor: "middle" as const };

const StartOrb = () => (
  <svg width="38" height="38" viewBox="0 0 38 38">
    <defs><radialGradient id="orb" cx=".5" cy=".95" r=".9"><stop offset="0" stopColor="#3fe3ff" /><stop offset=".4" stopColor="#1b7fb5" /><stop offset=".75" stopColor="#45617a" /><stop offset="1" stopColor="#b5c8d6" /></radialGradient></defs>
    <circle cx="19" cy="19" r="17.500" fill="url(#orb)" stroke="#a9cfe2" strokeWidth="1.200" />
    <path d="M11 10q4-2 7 0l-1.500 8q-4-2-7.500 0z" fill="#e8572a" /><path d="M19.500 10.500q4 2 8.500 0l-2 8q-4 2-8 0z" fill="#8cc63c" />
    <path d="M8.500 19.500q4-2 7.500 0l-1.500 8q-4-2-7.500 0z" fill="#2a9ce0" /><path d="M17.500 20q4 2 8 0l-2 8q-4 2-8 0z" fill="#fdc62f" />
  </svg>
);
const Ipg = () => (
  <svg width="32" height="32"><rect width="32" height="32" fill="#12509a" /><path d="M8 32Q28 24 32 8V32z" fill="#1b6dc4" /><text x="7" y="22" {...iconFont} fontSize="18" fontStyle="italic" fill="#fff">i</text><text x="19" y="21.500" {...iconFont} fontSize="13.500" fontStyle="italic" fontWeight={400} fill="#23364e">PG</text></svg>
);
const Explorer = () => (
  <svg width="34" height="32"><path d="M2 5h9l2 2h18v20H2z" fill="#d9b95a" /><path d="M5 3h8v4H5z" fill="#3fae49" /><path d="M14 5h7v4h-7z" fill="#d94c3a" /><path d="M22 6h8v4h-8z" fill="#3c8fd6" /><path d="M1 9h30l1 20H2z" fill="#f8e39b" /><path d="M7 20h22v10h-4v-5H11v5H7z" fill="#8fd0ee" stroke="#5ba7cd" /><path d="M3 14h26" stroke="#fdf3c8" /></svg>
);
const Youdao = () => (
  <svg width="32" height="32"><rect width="32" height="32" rx="4" fill="#e21a1a" /><text x="16" y="21.500" fontFamily="Noto Sans CJK SC, sans-serif" fontWeight="700" fontSize="15" fill="#fff" textAnchor="middle">有道</text></svg>
);
const Vmware = () => (
  <svg width="32" height="32" fill="none" strokeWidth="4.500" strokeLinejoin="round">
    <path d="M8 8l3-4q10-2 17-1 1 10-1 22l-6 3" stroke="#2f8fab" strokeWidth="2" fill="#4fb0cb" />
    <path d="M13 12.500V8h12v14h-5" stroke="#5bbcd6" strokeWidth="4" />
    <path d="M5 11h14v15H5z" stroke="#f5a01c" />
    <path d="M12 21.500h8.500V11" stroke="#f9c23c" strokeWidth="2.500" />
    <path d="M10 15h6v7h-6z" fill="#2c86a3" stroke="none" />
  </svg>
);
const Spiral = () => (
  <svg width="34" height="32"><path d="M1 14Q2 29 15 29Q31 27 32 5Q27 3 22 3Q13 4 12 13Q12 22 20 20L18 18Q9 20 1 14z" fill="#e8432f" /><circle cx="21" cy="12" r="8" fill="#ef5a45" /><path d="M13 21Q27 24 26 12Q23 6 17 9Q14 14 19 16Q23 15 21 12" fill="none" stroke="#f7b5a8" strokeWidth="1.500" /></svg>
);
const UltraEdit = () => (
  <svg width="34" height="34"><circle cx="17" cy="17" r="15.500" fill="#e2bd2c" stroke="#2b2820" strokeWidth="2" /><path d="M4 10Q14 0 27 8L8 16z" fill="#f4e08a" /><text x="13" y="18" {...iconFont} fontSize="14" fill="#4a4636">U</text><text x="22" y="27" {...iconFont} fontSize="15" fill="#111">E</text></svg>
);
const Typora = () => (
  <svg width="30" height="30"><rect x="3" y="2" width="24" height="26" rx="3" fill="#d5d9dc" transform="rotate(6 15 15)" /><rect x="2" y="2" width="25" height="26" rx="3" fill="#f6f6f6" transform="rotate(-3 15 15)" /><text x="14.500" y="20.500" fontFamily="Liberation Serif, serif" fontSize="17" fill="#333" textAnchor="middle">T</text></svg>
);
const BaiduPan = () => (
  <svg width="32" height="32" fill="none" strokeWidth="3.500"><rect width="32" height="32" rx="6" fill="#fff" /><circle cx="9.500" cy="19" r="4.500" stroke="#2d8cf0" /><circle cx="22.500" cy="19" r="4.500" stroke="#36a7ee" /><circle cx="16" cy="11" r="4.800" stroke="#2d7cf0" /><path d="M11.200 11a4.800 4.800 0 0 1 8.500-3" stroke="#f0525e" /><path d="M12.500 15L19 22" stroke="#f0525e" /><path d="M11 31h5" stroke="#e44" strokeWidth="2" /><path d="M16 31h5" stroke="#37f" strokeWidth="2" /></svg>
);
const Flash = ({ size }: { size: number }) => (
  <svg width={size} height={size} viewBox="0 0 32 32"><circle cx="16" cy="16" r="15.500" fill="#7d0a0d" /><path d="M4 9Q14-2 27 8Q16 10 5 20z" fill="#b03034" /><path d="M22 7C15 7 16 16 13 21Q12 24 8.500 24.500M14 15.500h6" fill="none" stroke="#fff" strokeWidth="3.200" /></svg>
);
const KIcon = () => (
  <svg width="32" height="32"><rect width="32" height="32" rx="6" fill="#1c80fb" /><circle cx="16" cy="16" r="12.200" fill="none" stroke="#fff" strokeWidth="2" /><text x="16" y="22" {...iconFont} fontSize="17" fontStyle="italic" fill="#fff">K</text></svg>
);
const TencentVideo = () => (
  <svg width="32" height="30"><path d="M7 2Q9 0 12 1L30 12Q32 15 30 17L14 28L8 26z" fill="#2ea3f2" /><path d="M1 4Q3 2 6 3L7 27Q4 28 2 26Q-1 15 1 4z" fill="#ff8a1c" /><path d="M6 3Q8 2 10 4L25 14Q26 15 25 17L10 26Q7 28 6 26z" fill="#6cc91c" /><path d="M9 9l11 6-11 7z" fill="#fff" /></svg>
);
const UcBrowser = () => (
  <svg width="32" height="32">
    <defs><linearGradient id="uc" x1="0" y1="1" x2="1" y2="0"><stop offset="0" stopColor="#ff5a1a" /><stop offset="1" stopColor="#ffc400" /></linearGradient></defs>
    <rect width="32" height="32" rx="6" fill="url(#uc)" />
    <path d="M4 12Q3 4 9 3.500Q16 4 14.500 11Q13 16 16 17Q17 13 22 11.500L23 7L26 11Q29 14 29.500 17Q26 18 24 17.500Q21 18 22 20Q25 23 22 28H8Q3 25 6 20Q10 15 8.500 11.500Q6 10 4 12z" fill="#fff" />
    <circle cx="13" cy="23" r="3.500" fill="none" stroke="#ff7a1a" strokeWidth="1.500" /><path d="M9 19Q15 15 19 21Q20 25 18 28" fill="none" stroke="#ff7a1a" strokeWidth="1.200" />
  </svg>
);
const WeChat = ({ size }: { size: number }) => (
  <svg width={size} height={size} viewBox="0 0 34 34"><path d="M13 4C5 4 1 9 1 14c0 4 2 6 4 8l-1 4 5-2c10 2 16-3 16-10S20 4 13 4z" fill="#7ed039" /><circle cx="9" cy="11" r="1.500" fill="#2d5c16" /><circle cx="17" cy="11" r="1.500" fill="#2d5c16" /><path d="M23 13c-6 0-9 4-9 8s4 8 10 8l4 2-1-3c4-2 6-4 6-7 0-5-4-8-10-8z" fill="#f2f2f2" /><circle cx="20" cy="19" r="1.300" fill="#555" /><circle cx="27" cy="19" r="1.300" fill="#555" /></svg>
);

const TrayGlyphs = [
  <svg width="18" height="20" key="kb" fill="none" stroke="#c9cdd2"><path d="M1.500 6.500h14v6h-14z" fill="#8a93a0" /><path d="M3 8.500h11M3 10.500h11" strokeDasharray="1 1" stroke="#fff" /><path d="M4 5q2-4 5-2t6-2" /></svg>,
  <svg width="16" height="16" key="globe"><circle cx="7.500" cy="8" r="7" fill="#3d8fc0" /><path d="M3 4q4-4 7 0-1 3-4 3-2 4-4 1zM9 9h4l-2 5z" fill="#a7d78f" /><path d="M8 8q3 0 4-1 1 1 3 1 0 5-3.500 7Q8 13 8 8z" fill="#4a4d52" stroke="#ccc" strokeWidth=".6" /></svg>,
  <svg width="16" height="16" key="iqiyi"><rect width="16" height="16" rx="1" fill="#0fbf1d" /><path d="M1.500 3.500h13M1.500 12.500h13" stroke="#fff" /><text x="8" y="10.600" {...iconFont} fontSize="7" fill="#fff">QIY</text></svg>,
  <Flash size={16} key="fl" />,
  <svg width="16" height="16" key="eagle"><circle cx="8" cy="8" r="7" fill="#e8eef2" /><path d="M2 6q4-5 9 0l3 6q-6-1-7-4-3 0-5-2z" fill="#2c78a8" /><circle cx="9" cy="9" r="2.500" fill="#6ab04a" /></svg>,
  <svg width="16" height="16" key="j"><rect width="16" height="16" fill="#0d6fd6" /><path d="M1.500 8q2-3 4 0 1.500 4 5 3 2-1 1.500-8M10 5l2.500-2.500L15 5" fill="none" stroke="#fff" strokeWidth="1.800" /></svg>,
  <WeChat size={17} key="wx" />,
  <svg width="16" height="16" key="yd"><rect width="16" height="16" rx="2" fill="#e3201b" /><path d="M7 3.500H3v4h4zM7 3.500v5l-4 4M9 4h4l-1 8-3 0M9 8h3" fill="none" stroke="#fff" strokeWidth="1.600" /></svg>,
  <svg width="16" height="16" key="sp" fill="none" stroke="#e4e4e4" strokeWidth="1.200"><circle cx="8" cy="8" r="7" fill="#33373b" stroke="#888" /><path d="M12 5a5 5 0 1 0 .5 5M10.500 6.500a3 3 0 1 0 0 3.500" /><circle cx="8" cy="8" r="1" fill="#fff" /></svg>,
  <svg width="14" height="14" key="sq" fill="#173f70" stroke="#fff"><path d="M5.500 1.500h7v7h-7z" /><path d="M1.500 5.500h7v7h-7z" /><path d="M5.500 5.500h3v3h-3z" fill="#fff" /></svg>,
  <svg width="16" height="16" key="vol"><path d="M1 5.500h3L9 1v14l-5-4.500H1z" fill="#d8694d" stroke="#f2b6a2" strokeWidth=".7" /><path d="M11.500 5q1.500 3 0 6M14 3q2.500 5 0 10" fill="none" stroke="#8c4a45" /></svg>,
  <svg width="16" height="18" key="usb"><path d="M2 1h6v4H2zM1 5h8v8H6v3H4v-3H1z" fill="#8f959b" /><circle cx="11" cy="12" r="5" fill="#2fa52b" /><path d="M8.500 12l2 2 3-4" fill="none" stroke="#fff" strokeWidth="1.500" /></svg>,
  <svg width="16" height="16" key="net" fill="#1b3f6c" stroke="#fff"><path d="M4.500 4.500h11v8h-11z" /><path d="M7 14.500h7" /><path d="M2.500 7v8h3M1 1v3.500h4V1M3 5v2" fill="none" /></svg>,
  <svg width="14" height="16" key="spk" fill="#fff"><path d="M1 5.500h3L8 2v12l-4-3.500H1z" /><path d="M10.500 5.500q1.500 2.500 0 5" fill="none" stroke="#fff" /></svg>,
];

function TaskbarView() {
  return (
    <Taskbar>
      <TaskItem $w={54}><StartOrb /></TaskItem>
      <TaskItem $w={60} $ml={5}><Ipg /></TaskItem>
      <TaskItem $w={55} $ml={2} $open $stack><Explorer /></TaskItem>
      <TaskItem $w={59} $ml={8} $open><VscVscode size={32} color="#1583cf" /></TaskItem>
      <TaskItem $w={59} $ml={3} $open><Youdao /></TaskItem>
      <TaskItem $w={60} $ml={3}><Vmware /></TaskItem>
      <TaskItem $w={54} $ml={2} $open $stack><Spiral /></TaskItem>
      <TaskItem $w={60} $ml={7}><UltraEdit /></TaskItem>
      <TaskItem $w={52} $ml={2} $open $stack><Typora /></TaskItem>
      <TaskItem $w={60} $ml={10}><BaiduPan /></TaskItem>
      <TaskItem $w={60} $ml={2}><Flash size={32} /></TaskItem>
      <TaskItem $w={60} $ml={2}><KIcon /></TaskItem>
      <TaskItem $w={60} $ml={2}><TencentVideo /></TaskItem>
      <TaskItem $w={52} $ml={2} $open $active $stack><UcBrowser /></TaskItem>
      <TaskItem $w={60} $ml={10} $open><WeChat size={34} /></TaskItem>
      <Tray>
        <Slot $w={38}>{TrayGlyphs[0]}</Slot>
        {TrayGlyphs.slice(1).map((g, i) => <Slot $w={24} key={i}>{g}</Slot>)}
        <Clock>10:00<br />2020/8/23</Clock>
        <ShowDesktop />
      </Tray>
    </Taskbar>
  );
}

export default function App() {
  return (
    <Desktop>
      <GlobalStyle />
      <Windows>
        <DashboardWindow />
        <GrafanaWindow />
      </Windows>
      <TaskbarView />
      <Thermometer>
        <svg width="13" height="58">
          <path d="M4 4a3 3 0 0 1 6 0v39.500a6.500 6.500 0 1 1-6 0z" fill="#3c4a55" />
          <path d="M6.300 29h1.600v18H6.300z" fill="#35b7e8" /><circle cx="7" cy="49.500" r="4.600" fill="#35b7e8" />
        </svg>
      </Thermometer>
    </Desktop>
  );
}
